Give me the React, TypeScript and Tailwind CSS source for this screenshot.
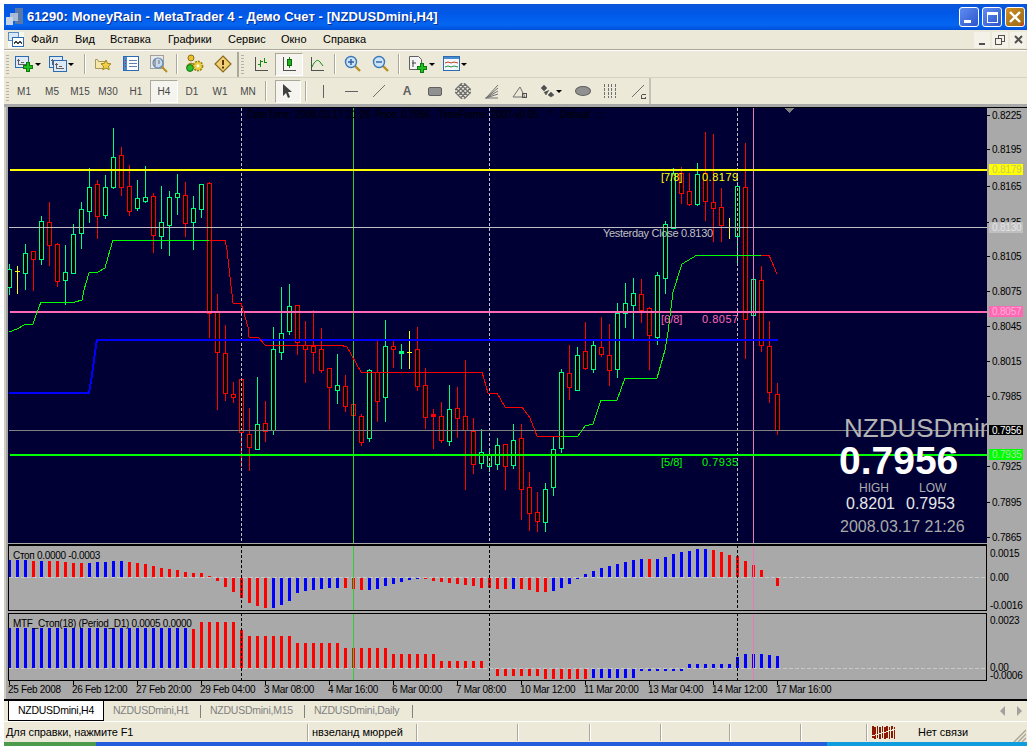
import type { ReactNode } from "react";

type Candle = [number, number, number, number, "g" | "r" | "y"];

// hi, body top, body bottom, lo. x comes from the index: 9 + 8k
const CANDLES: Candle[] = [
  [264, 269, 287, 295, "g"], [266, 271, 271, 294, "y"], [244, 253, 273, 290, "g"], [251, 251, 259, 291, "r"],
  [216, 221, 259, 265, "g"], [202, 222, 245, 266, "r"], [243, 244, 281, 287, "r"], [245, 272, 280, 305, "g"],
  [224, 234, 273, 273, "g"], [202, 209, 233, 249, "g"], [168, 187, 211, 223, "g"], [180, 184, 216, 239, "r"],
  [175, 187, 215, 219, "g"], [128, 157, 187, 189, "g"], [147, 155, 187, 196, "r"], [165, 186, 211, 216, "r"],
  [180, 198, 208, 211, "g"], [166, 197, 201, 203, "g"], [193, 196, 235, 253, "r"], [186, 222, 236, 249, "g"],
  [191, 197, 225, 256, "g"], [174, 193, 197, 215, "g"], [182, 195, 223, 237, "r"], [196, 208, 222, 250, "g"],
  [184, 184, 209, 218, "g"], [182, 183, 313, 338, "r"], [294, 312, 352, 410, "r"], [325, 353, 393, 401, "r"],
  [382, 394, 397, 403, "r"], [379, 379, 432, 467, "r"], [408, 434, 447, 471, "r"], [377, 424, 449, 449, "g"],
  [401, 423, 431, 442, "r"], [327, 349, 430, 435, "g"], [287, 333, 352, 360, "g"], [284, 306, 331, 335, "g"],
  [305, 305, 342, 355, "r"], [321, 345, 349, 383, "r"], [310, 346, 352, 374, "r"], [328, 349, 370, 373, "r"],
  [368, 368, 387, 431, "r"], [354, 385, 390, 404, "g"], [375, 386, 406, 412, "r"], [399, 404, 415, 430, "r"],
  [414, 416, 442, 446, "r"], [369, 370, 438, 442, "g"], [341, 372, 401, 422, "r"], [320, 346, 397, 422, "g"],
  [341, 346, 349, 368, "r"], [344, 351, 353, 369, "g"], [331, 352, 352, 369, "y"], [327, 349, 386, 391, "r"],
  [368, 385, 417, 429, "r"], [409, 414, 416, 449, "r"], [402, 416, 440, 443, "r"], [385, 409, 441, 446, "g"],
  [387, 408, 418, 438, "r"], [360, 416, 430, 490, "r"], [418, 431, 464, 474, "r"], [429, 452, 463, 469, "g"],
  [450, 454, 466, 472, "g"], [438, 445, 464, 470, "g"], [444, 444, 466, 490, "r"], [424, 440, 465, 469, "g"],
  [424, 438, 489, 520, "r"], [472, 487, 513, 531, "r"], [492, 512, 521, 532, "r"], [483, 489, 522, 532, "g"],
  [437, 449, 487, 496, "g"], [369, 372, 448, 453, "g"], [345, 373, 387, 400, "r"], [347, 355, 390, 390, "g"],
  [322, 351, 368, 370, "r"], [341, 345, 369, 373, "g"], [317, 347, 354, 357, "r"], [324, 355, 370, 386, "r"],
  [303, 313, 369, 378, "g"], [283, 303, 313, 328, "g"], [278, 293, 305, 339, "g"], [279, 294, 310, 323, "r"],
  [307, 308, 335, 370, "r"], [272, 275, 337, 345, "g"], [221, 224, 278, 294, "g"], [168, 173, 228, 229, "g"],
  [167, 173, 193, 204, "r"], [173, 191, 204, 206, "r"], [163, 174, 204, 206, "g"], [132, 173, 201, 221, "r"],
  [134, 202, 208, 242, "r"], [188, 207, 225, 242, "r"], [218, 227, 227, 239, "y"], [182, 186, 236, 263, "g"],
  [143, 187, 319, 359, "r"], [237, 279, 315, 347, "g"], [266, 280, 345, 352, "r"], [321, 346, 392, 403, "r"],
  [383, 394, 430, 435, "r"],
];

const CANDLE_COLORS = { g: "#00ff7f", r: "#ff0000", y: "#ffff00" };

const SUB1: [number, "b" | "r"][] = [
  [17, "b"], [17, "b"], [17, "b"], [16, "r"], [16, "b"], [16, "r"], [16, "r"], [15, "r"], [14, "r"], [14, "r"],
  [14, "b"], [15, "b"], [15, "b"], [16, "b"], [16, "b"], [15, "r"], [14, "r"], [13, "r"], [11, "r"], [9, "r"],
  [8, "r"], [7, "r"], [5, "r"], [4, "r"], [4, "r"], [1, "r"], [-3, "r"], [-9, "r"], [-14, "r"], [-20, "r"],
  [-25, "r"], [-28, "r"], [-30, "r"], [-30, "b"], [-27, "b"], [-23, "b"], [-15, "b"], [-13, "b"], [-12, "b"],
  [-11, "b"], [-10, "b"], [-10, "b"], [-10, "r"], [-11, "r"], [-12, "r"], [-12, "b"], [-11, "b"], [-8, "b"],
  [-6, "b"], [-4, "b"], [-2, "b"], [-1, "b"], [-1, "r"], [-3, "r"], [-4, "r"], [-5, "r"], [-6, "r"], [-7, "r"],
  [-8, "r"], [-10, "r"], [-10, "r"], [-11, "r"], [-11, "r"], [-11, "b"], [-11, "r"], [-12, "r"], [-14, "r"],
  [-14, "r"], [-13, "b"], [-10, "b"], [-6, "b"], [-1, "b"], [3, "b"], [6, "b"], [9, "b"], [11, "b"], [13, "b"],
  [15, "b"], [17, "b"], [18, "b"], [18, "r"], [18, "b"], [20, "b"], [23, "b"], [25, "b"], [26, "b"], [28, "b"],
  [28, "b"], [27, "r"], [25, "r"], [22, "r"], [21, "r"], [16, "r"], [12, "r"], [7, "r"], [0, "r"], [-8, "r"],
];

// runs of [count, height, colour] for the MTF window
const SUB2_RUNS: [number, number, "b" | "r"][] = [
  [23, 40, "b"], [1, 39, "r"], [5, 46, "r"], [1, 38, "r"], [6, 32, "r"], [6, 25, "r"], [6, 20, "r"], [6, 14, "r"],
  [6, 7, "r"], [1, 0, "r"], [6, -7, "r"], [6, -10, "r"], [6, -9, "b"], [6, -2, "b"], [6, 4, "b"], [1, 11, "b"],
  [3, 14, "b"], [1, 13, "b"], [1, 12, "b"],
];
const SUB2 = SUB2_RUNS.flatMap(([n, h, c]) => Array.from({ length: n }, () => [h, c] as const));

const BAR_COLORS = { b: "#0000ff", r: "#ff0000" };

const TREND: { color: string; pts: [number, number][] }[] = [
  {
    color: "#00ff00",
    pts: [[9, 332], [17, 329], [24, 325], [33, 324], [36, 315], [41, 302], [75, 302], [82, 300], [84, 290], [89, 273], [98, 272], [105, 268], [108, 257], [113, 240], [209, 240]],
  },
  {
    color: "#ff0000",
    pts: [[209, 240], [225, 240], [227, 250], [230, 277], [233, 303], [241, 303], [248, 327], [249, 337], [258, 337], [265, 345], [340, 345], [347, 347], [361, 372], [482, 372], [488, 393], [497, 393], [505, 407], [522, 407], [530, 418], [537, 436], [561, 436]],
  },
  {
    color: "#00ff00",
    pts: [[561, 436], [578, 436], [585, 426], [593, 424], [601, 400], [617, 400], [625, 378], [657, 378], [665, 350], [668, 332], [673, 292], [682, 264], [697, 255], [761, 255]],
  },
  { color: "#ff0000", pts: [[761, 255], [769, 255], [777, 274]] },
];

const PRICE_TICKS: [string, number][] = [
  ["0.8225", 115], ["0.8195", 149], ["0.8165", 186], ["0.8135", 222], ["0.8105", 256], ["0.8075", 291],
  ["0.8045", 326], ["0.8015", 361], ["0.7985", 396], ["0.7925", 466], ["0.7895", 502], ["0.7865", 537],
];

const PRICE_TAGS: [string, number, string, string][] = [
  ["0.8179", 164, "#ffff00", "#c8c860"],
  ["0.8130", 222, "#c0c0c0", "#e4e4e4"],
  ["0.8057", 306, "#ff69b4", "#ffb0d8"],
  ["0.7956", 425, "#000000", "#ffffff"],
  ["0.7935", 449, "#00ff00", "#a0e8a0"],
];

const TIME_LABELS = [
  "25 Feb 2008", "26 Feb 12:00", "27 Feb 20:00", "29 Feb 04:00", "3 Mar 08:00", "4 Mar 16:00", "6 Mar 00:00",
  "7 Mar 08:00", "10 Mar 12:00", "11 Mar 20:00", "13 Mar 04:00", "14 Mar 12:00", "17 Mar 16:00",
];

const MENU = [
  ["Файл", "w-[44px]"],
  ["Вид", "w-[35px]"],
  ["Вставка", "w-[58px]"],
  ["Графики", "w-[60px]"],
  ["Сервис", "w-[53px]"],
  ["Окно", "w-[42px]"],
  ["Справка", "w-[60px]"],
];

const PERIODS = ["M1", "M5", "M15", "M30", "H1", "H4", "D1", "W1", "MN"];

const STATUS_SEPS = ["w-[72px]", "w-[71px]", "w-[69px]", "w-[71px]", "w-[66px]"];

function xOf(k: number) {
  return 9 + 8 * k;
}

function VerticalLines({ y1, y2, dash, green, pink }: { y1: number; y2: number; dash: string; green: string; pink: string }) {
  return (
    <g shapeRendering="crispEdges">
      {[241, 489, 737].map((x) => (
        <line key={x} x1={x + 0.5} x2={x + 0.5} y1={y1} y2={y2} stroke={dash} strokeDasharray="3 2" />
      ))}
      <line x1={353.5} x2={353.5} y1={y1} y2={y2} stroke={green} />
      <line x1={753.5} x2={753.5} y1={y1} y2={y2} stroke={pink} />
    </g>
  );
}

function MainChart() {
  return (
    <svg width={1019} height={435} viewBox="8 108 1019 435" className="block shrink-0">
      <defs>
        <clipPath id="canvas">
          <rect x={8} y={108} width={979} height={435} />
        </clipPath>
      </defs>
      <rect x={8} y={108} width={979} height={435} fill="#000035" />
      <g clipPath="url(#canvas)">
        <g shapeRendering="crispEdges">
          {CANDLES.map(([hi, top, bot, lo, c], k) => {
            const x = xOf(k);
            const color = CANDLE_COLORS[c];
            return (
              <g key={k}>
                <line x1={x + 0.5} x2={x + 0.5} y1={hi} y2={lo} stroke={color} />
                {top === bot ? (
                  <line x1={x - 2} x2={x + 3} y1={top + 0.5} y2={top + 0.5} stroke={color} />
                ) : (
                  <rect x={x - 1.5} y={top + 0.5} width={4} height={bot - top} fill={bot - top <= 2 ? color : "#000000"} stroke={color} />
                )}
              </g>
            );
          })}
        </g>
        <VerticalLines y1={108} y2={543} dash="#c0c0c0" green="#32cd32" pink="#e878b8" />
        <g shapeRendering="crispEdges">
          <line x1={10} x2={987} y1={170} y2={170} stroke="#ffff00" strokeWidth={2} />
          <line x1={9} x2={987} y1={227.5} y2={227.5} stroke="#c0c0c0" />
          <line x1={10} x2={987} y1={312} y2={312} stroke="#ff69b4" strokeWidth={2} />
          <line x1={9} x2={987} y1={430.5} y2={430.5} stroke="#808080" />
          <line x1={10} x2={987} y1={455} y2={455} stroke="#00ff00" strokeWidth={2} />
          <polyline points="9,393 89,393 90,387 92,375 94,360 96,345 97,340 778,340" fill="none" stroke="#0000ff" strokeWidth={2} />
          {TREND.map((t, i) => (
            <polyline key={i} points={t.pts.map((p) => p.join(",")).join(" ")} fill="none" stroke={t.color} />
          ))}
          <polygon points="785,108 794,108 789.5,113" fill="#808080" />
        </g>
        <g fontSize={10} letterSpacing={-0.3} fill="#000000">
          <text x={230} y={118}>:::</text>
          <text x={247} y={118} letterSpacing={-0.1}>DateTime: 2008.03.17 21:26</text>
          <text x={375} y={118}>Price: 0.7956</text>
          <text x={438} y={118}>TimeFrame: 2007-v0.05</text>
          <text x={548} y={118}>*</text>
          <text x={560} y={118}>Default</text>
          <text x={596} y={118}>:::</text>
        </g>
        <g fontSize={11}>
          <g fill="#ffff00">
            <text x={661} y={181}>[7/8]</text>
            <text x={702} y={181} letterSpacing={0.5}>0.8179</text>
          </g>
          <text x={603} y={237} fill="#c0c0c0" letterSpacing={-0.3}>Yesterday Close 0.8130</text>
          <g fill="#ff69b4">
            <text x={661} y={323}>[6/8]</text>
            <text x={702} y={323} letterSpacing={0.5}>0.8057</text>
          </g>
          <g fill="#00ff00">
            <text x={661} y={466}>[5/8]</text>
            <text x={702} y={466} letterSpacing={0.5}>0.7935</text>
          </g>
        </g>
        <text x={844} y={437} fontSize={26} fill="#b4b4b4">NZDUSDmini</text>
        <text x={839} y={474} fontSize={39} fontWeight={700} fill="#ffffff">0.7956</text>
        <text x={859} y={492} fontSize={12} fill="#b0b0b0">HIGH</text>
        <text x={919} y={492} fontSize={12} fill="#b0b0b0">LOW</text>
        <text x={846} y={509} fontSize={16} fill="#e8e8e8">0.8201</text>
        <text x={906} y={509} fontSize={16} fill="#e8e8e8">0.7953</text>
        <text x={840} y={532} fontSize={16} fill="#a9a9a9">2008.03.17 21:26</text>
      </g>
      <g shapeRendering="crispEdges" fill="#000000">
        {PRICE_TICKS.map(([, y]) => (
          <rect key={y} x={987} y={y} width={3} height={1} />
        ))}
      </g>
      <g fontSize={10} letterSpacing={-0.2} fill="#000000">
        {PRICE_TICKS.map(([label, y]) => (
          <text key={label} x={992} y={y + 4}>{label}</text>
        ))}
      </g>
      {PRICE_TAGS.map(([label, y, bg, fg]) => (
        <g key={label}>
          <rect x={989} y={y} width={34} height={label === "0.7956" ? 10 : 11} fill={bg} shapeRendering="crispEdges" />
          <text x={992} y={y + 9} fontSize={10} letterSpacing={-0.2} fill={fg}>{label}</text>
        </g>
      ))}
    </svg>
  );
}

function SubWindow({ top, height, base, bars, label, ticks }: {
  top: number;
  height: number;
  base: number;
  bars: readonly (readonly [number, "b" | "r"])[];
  label: string;
  ticks: [string, number][];
}) {
  return (
    <svg width={1019} height={height} viewBox={`8 ${top} 1019 ${height}`} className="block shrink-0">
      <g shapeRendering="crispEdges">
        <line x1={9} x2={986} y1={base + 0.5} y2={base + 0.5} stroke="#c8c8c8" strokeDasharray="4 2" />
        {bars.map(([h, c], k) =>
          h === 0 ? null : (
            <rect key={k} x={xOf(k) - 1} y={h > 0 ? base - h : base + 1} width={3} height={Math.abs(h)} fill={BAR_COLORS[c]} />
          ),
        )}
      </g>
      <VerticalLines y1={top} y2={top + height} dash="#000000" green="#32cd32" pink="#e878b8" />
      <rect x={8.5} y={top + 0.5} width={978} height={height - 1} fill="none" stroke="#000000" shapeRendering="crispEdges" />
      <text x={13} y={top + 14} fontSize={10} letterSpacing={-0.3} fill="#000000">{label}</text>
      <g fontSize={10} letterSpacing={-0.2} fill="#000000">
        {ticks.map(([t, y]) => (
          <g key={t}>
            <rect x={988} y={y - 3} width={34} height={9} fill="#a9a9a9" shapeRendering="crispEdges" />
            <text x={990} y={y + 4}>{t}</text>
          </g>
        ))}
      </g>
    </svg>
  );
}

function TimeAxis() {
  return (
    <div className="flex h-[17px] shrink-0 pl-px">
      {TIME_LABELS.map((t) => (
        <div key={t} className="flex w-[64px] shrink-0 flex-col">
          <div className="h-[4px] w-px bg-black" />
          <span className="-ml-px -mt-px whitespace-nowrap text-[10px] leading-[12px] tracking-[-0.3px] text-black">{t}</span>
        </div>
      ))}
    </div>
  );
}

function Button({ w = "w-[28px]", active, children }: { w?: string; active?: boolean; children: ReactNode }) {
  return (
    <div
      className={
        "flex h-[23px] shrink-0 items-center justify-center " +
        w +
        (active ? " border border-t-[#aca899] border-r-white border-b-white border-l-[#aca899] bg-[#f5f4ee]" : "")
      }
    >
      {children}
    </div>
  );
}

function Sep() {
  return <div className="mx-[3px] h-[20px] w-[2px] shrink-0 border-r border-r-white bg-[#aca899]" />;
}

function Grip({ mr }: { mr: string }) {
  return (
    <div className={"ml-[2px] flex h-[19px] w-[3px] shrink-0 flex-col justify-between " + mr}>
      {Array.from({ length: 7 }).map((_, i) => (
        <div key={i} className="h-px w-[3px] bg-[#b5b2a5]" />
      ))}
    </div>
  );
}

function Caret() {
  return <div className="ml-px h-0 w-0 border-x-[3px] border-t-[3px] border-x-transparent border-t-black" />;
}

function Ico({ children, w = 18, h = 18 }: { children: ReactNode; w?: number; h?: number }) {
  return (
    <svg width={w} height={h} viewBox={`0 0 ${w} ${h}`} className="shrink-0">
      {children}
    </svg>
  );
}

function MiniWindow({ x = 0, y = 0 }: { x?: number; y?: number }) {
  return (
    <g transform={`translate(${x} ${y})`} shapeRendering="crispEdges">
      <rect x={0.5} y={0.5} width={13} height={11} fill="#dfe8f5" stroke="#2b6cb0" />
      <path d="M3 2.5v6h8M1.5 4.5h3M6 6.5h3" fill="none" stroke="#606060" />
    </g>
  );
}

function Plus({ x, y }: { x: number; y: number }) {
  return (
    <path
      transform={`translate(${x} ${y})`}
      d="M3.5 .5h3v3h3v3h-3v3h-3v-3h-3v-3h3z"
      fill="#22c022"
      stroke="#0c7a0c"
      shapeRendering="crispEdges"
    />
  );
}

function Magnifier({ sign }: { sign?: "+" | "-" }) {
  return (
    <Ico>
      <path d="M11 11l5 5" stroke="#b8901c" strokeWidth={2.4} />
      <circle cx={7} cy={7} r={5.5} fill="#cfe3f8" stroke="#3a78b8" strokeWidth={1.4} />
      {sign && <path d={sign === "+" ? "M4 7h6M7 4v6" : "M4 7h6"} stroke="#2a60a0" strokeWidth={1.4} />}
    </Ico>
  );
}

function Toolbar1() {
  return (
    <div className="flex h-[26px] shrink-0 items-center">
      <Grip mr="mr-[5px]" />
      <div className="flex w-[34px] shrink-0 items-center pl-px">
        <Ico w={19}><MiniWindow x={0} y={1} /><Plus x={8} y={7} /></Ico>
        <Caret />
      </div>
      <div className="flex w-[33px] shrink-0 items-center pl-[1px]">
        <Ico w={18}><MiniWindow x={0} y={1} /><MiniWindow x={4} y={5} /></Ico>
        <Caret />
      </div>
      <Sep />
      <Button>
        <Ico>
          <path d="M1.5 4.5v9h9l2-7h-8l-1-2z" fill="#f6e6a8" stroke="#a89858" />
          <path d="M12 5l1.6 3.4 3.4.4-2.5 2.4.7 3.6-3.2-1.8-3.2 1.8.7-3.6L7 8.8l3.4-.4z" fill="#f0d040" stroke="#a08820" />
        </Ico>
      </Button>
      <Button>
        <Ico w={16}>
          <g shapeRendering="crispEdges">
            <rect x={0.5} y={1.5} width={15} height={14} fill="#ffffff" stroke="#2b6cb0" />
            <rect x={1} y={2} width={3} height={13} fill="#4a8ad0" />
            <path d="M6 5h8M6 8h8M6 11h8" stroke="#6080b0" />
            <path d="M2 5h1M2 8h1M2 11h1" stroke="#c02020" />
          </g>
        </Ico>
      </Button>
      <Button>
        <Ico>
          <rect x={0.5} y={0.5} width={13} height={13} fill="#e8e8e8" stroke="#a0a0a0" shapeRendering="crispEdges" />
          <path d="M11 11l6 6" stroke="#b8901c" strokeWidth={2} />
          <circle cx={8} cy={8} r={5} fill="#c8d8ec" stroke="#6088b0" strokeWidth={1.2} />
          <path d="M5 4v7M9 5v4" stroke="#707070" />
        </Ico>
      </Button>
      <Sep />
      <Button>
        <Ico w={20} h={20}>
          <circle cx={6} cy={4} r={3} fill="#e8c030" stroke="#907010" />
          <path d="M2 13c0-5 8-5 8 0z" fill="#e0b828" stroke="#907010" />
          <circle cx={5} cy={14} r={3.4} fill="#30c030" stroke="#107010" />
          <circle cx={13} cy={12} r={4.6} fill="#e8d040" stroke="#a08010" strokeDasharray="2 1" strokeWidth={1.6} />
          <circle cx={13} cy={12} r={1.4} fill="#ffffff" />
        </Ico>
      </Button>
      <Button>
        <Ico>
          <path d="M9 1l8 8-8 8-8-8z" fill="#f0d070" stroke="#8a6a20" strokeWidth={1.2} />
          <path d="M9 5v5" stroke="#603010" strokeWidth={2} />
          <rect x={8} y={11.5} width={2} height={2} fill="#603010" />
        </Ico>
      </Button>
      <div className="h-[25px] w-[2px] shrink-0 bg-[#aca899]" />
      <Grip mr="mr-[3px]" />
      <Button>
        <Ico>
          <path d="M3.5 2v13.5H16" fill="none" stroke="#505050" shapeRendering="crispEdges" />
          <path d="M8.5 12V5M8.5 9H6M8.5 6H11M12.5 8V3M12.5 7H15" fill="none" stroke="#108a10" shapeRendering="crispEdges" />
        </Ico>
      </Button>
      <Button active>
        <Ico>
          <path d="M3.5 2v13.5H16" fill="none" stroke="#505050" shapeRendering="crispEdges" />
          <path d="M9.5 2v11" stroke="#108a10" shapeRendering="crispEdges" />
          <rect x={7.5} y={4.5} width={4} height={6} fill="#20b020" stroke="#0a6a0a" shapeRendering="crispEdges" />
        </Ico>
      </Button>
      <Button>
        <Ico>
          <path d="M3.5 2v13.5H16" fill="none" stroke="#505050" shapeRendering="crispEdges" />
          <path d="M4 12c3-7 6-8 8-5l3 4" fill="none" stroke="#108a10" />
        </Ico>
      </Button>
      <Sep />
      <Button><Magnifier sign="+" /></Button>
      <Button><Magnifier sign="-" /></Button>
      <Sep />
      <div className="flex w-[33px] shrink-0 items-center pl-[5px]">
        <Ico w={20}>
          <path d="M1.5 1.5h9l3 3v10h-12z" fill="#f4f4f4" stroke="#606060" />
          <path d="M5 5v7M4 8h4" stroke="#404040" />
          <Plus x={9} y={8} />
        </Ico>
        <Caret />
      </div>
      <div className="flex w-[33px] shrink-0 items-center pl-[7px]">
        <Ico w={17}>
          <g shapeRendering="crispEdges">
            <rect x={0.5} y={1.5} width={16} height={14} fill="#f4f8fc" stroke="#2b6cb0" />
            <rect x={1} y={2} width={15} height={2} fill="#4a8ad0" />
          </g>
          <path d="M2 8l3-1 3 1 3-1 4 1" fill="none" stroke="#c04020" />
          <path d="M2 12l3-1 3 1 3-1 4 1" fill="none" stroke="#209040" />
        </Ico>
        <Caret />
      </div>
    </div>
  );
}

function Toolbar2() {
  return (
    <div className="flex h-[26px] w-[647px] shrink-0 items-center border-r-2 border-r-[#c5c2b8]">
      <Grip mr="mr-px" />
      {PERIODS.map((p) => (
        <Button key={p} active={p === "H4"}>
          <span className="text-[10px] text-[#484848]">{p}</span>
        </Button>
      ))}
      <Sep />
      <div className="w-[5px] shrink-0" />
      <Button active w="w-[26px]">
        <Ico w={12} h={16}>
          <path d="M1 1v12l3-3 2 5 2-1-2-5h4z" fill="#404040" />
        </Ico>
      </Button>
      <div className="ml-[4px] mr-[2px] h-[20px] w-[2px] shrink-0 border-r border-r-white bg-[#aca899]" />
      <Button><div className="h-[13px] w-px bg-[#606060]" /></Button>
      <Button><div className="h-px w-[13px] bg-[#606060]" /></Button>
      <Button>
        <Ico w={14} h={14}><path d="M1 13L13 1" stroke="#707070" /></Ico>
      </Button>
      <Button><span className="text-[12px] font-bold text-[#606060]">A</span></Button>
      <Button><div className="h-[9px] w-[14px] rounded-[2px] border border-[#606060] bg-[#909090]" /></Button>
      <Button>
        <Ico w={16} h={16}>
          <path d="M0 0h16M0 4h16M0 8h16M0 12h16M0 16h16M0 0v16M4 0v16M8 0v16M12 0v16M16 0v16" transform="rotate(45 8 8) scale(.8) translate(2 2)" stroke="#707070" strokeWidth={1.6} fill="none" />
        </Ico>
      </Button>
      <Button>
        <Ico w={15} h={15}>
          <path d="M2 14L14 1M2 14L14 4M2 14L14 7M2 14L14 10M1 14h13" stroke="#707070" fill="none" />
        </Ico>
      </Button>
      <Button>
        <Ico w={15} h={15}>
          <path d="M1 13L8 3l5 10z" fill="none" stroke="#707070" />
          <rect x={10} y={9} width={4} height={4} fill="none" stroke="#505050" shapeRendering="crispEdges" />
        </Ico>
      </Button>
      <div className="flex w-[37px] shrink-0 items-center justify-center">
        <Ico w={14} h={14}>
          <path d="M3 1l3 3-3 3-3-3zM3 8l2 3 3-5M10 8l3 3-3 2-3-2z" fill="#505050" stroke="#505050" strokeWidth={0.5} />
        </Ico>
        <Caret />
      </div>
      <Button w="w-[26px]"><div className="h-[10px] w-[16px] rounded-[50%] border border-[#606060] bg-[#909090]" /></Button>
      <Button>
        <Ico w={14} h={16}>
          <path d="M1.5 1v14M5.5 1v14M8.5 1v14M12.5 1v14" stroke="#707070" shapeRendering="crispEdges" strokeDasharray="3 1" />
        </Ico>
      </Button>
      <Button w="w-[29px]">
        <Ico w={15} h={15}>
          <path d="M1 13L13 1" stroke="#707070" />
          <path d="M10.5 10.5h4M10.5 10.5v4h4M14.5 12.5v2h-2" fill="none" stroke="#505050" shapeRendering="crispEdges" />
        </Ico>
      </Button>
    </div>
  );
}

export default function App() {
  return (
    <div className="h-[746px] w-[1032px] overflow-hidden bg-white pl-[4px] pr-[5px] pt-[4px] font-['Liberation_Sans',Arial,sans-serif]">
      <div className="flex h-[742px] w-[1023px] flex-col bg-[#ece9d8] text-[11px] text-black">
        {/* Title bar */}
        <div className="flex h-[26px] shrink-0 items-center bg-[linear-gradient(180deg,#0a56d8_0%,#0058e8_35%,#0466f2_80%,#0050d8_100%)] pl-[2px] pr-[2px]">
          <svg width={17} height={18} viewBox="0 0 19 20" className="mr-[4px] shrink-0" shapeRendering="crispEdges">
            <rect x={10} y={0} width={9} height={18} fill="#5878a8" />
            <rect x={5} y={5} width={8} height={9} fill="#a8bcd8" />
            <rect x={0} y={10} width={8} height={9} fill="#c8d4e4" />
          </svg>
          <span className="text-[13px] font-bold tracking-[0.08px] text-white [text-shadow:1px_1px_0_#0a2a88]">
            61290: MoneyRain - MetaTrader 4 - Демо Счет - [NZDUSDmini,H4]
          </span>
          <div className="ml-auto flex gap-[3px]">
            <div className="flex h-[20px] w-[20px] items-end justify-start rounded-[3px] border border-white bg-[linear-gradient(135deg,#5f8df0,#2a55cc)] pb-[3px] pl-[4px]">
              <div className="h-[3px] w-[7px] bg-white" />
            </div>
            <div className="flex h-[20px] w-[20px] items-center justify-center rounded-[3px] border border-white bg-[linear-gradient(135deg,#5f8df0,#2a55cc)]">
              <div className="h-[11px] w-[11px] border border-t-[3px] border-white" />
            </div>
            <div className="relative flex h-[20px] w-[20px] items-center justify-center overflow-hidden rounded-[3px] border border-white bg-[linear-gradient(135deg,#d89020_0%,#b07a1c_50%,#a87018_85%,#e01010_100%)]">
              <svg width={14} height={14} viewBox="0 0 14 14">
                <path d="M2 2l10 10M12 2L2 12" stroke="#ffffff" strokeWidth={2.4} />
              </svg>
            </div>
          </div>
        </div>

        {/* Menu bar */}
        <div className="flex h-[20px] shrink-0 items-center border-b border-b-[#aca899] pl-[4px] pr-[1px]">
          <svg width={16} height={16} viewBox="0 0 16 16" className="mr-[7px] shrink-0 bg-[#f8f8f4]" shapeRendering="crispEdges">
            <rect x={0.5} y={0.5} width={10} height={8} fill="#d8e8f8" stroke="#5a8ac0" />
            <rect x={4.5} y={5.5} width={11} height={9} fill="#ffffff" stroke="#2b6cb0" />
            <path d="M6 12l2-3 2 3 2-3 2 3" fill="none" stroke="#404040" />
          </svg>
          {MENU.map(([m, w]) => (
            <span key={m} className={"shrink-0 text-[11px] " + w}>{m}</span>
          ))}
          <div className="ml-auto flex gap-[2px]">
            <div className="flex h-[16px] w-[16px] items-end justify-center bg-[#f4f2e8] pb-[3px]">
              <div className="h-[2px] w-[6px] bg-[#505050]" />
            </div>
            <div className="flex h-[16px] w-[16px] items-center justify-center bg-[#f4f2e8]">
              <svg width={10} height={10} viewBox="0 0 10 10" shapeRendering="crispEdges">
                <path d="M3 .5h6.5v6H7M3 .5v2M.5 3.5h6v6h-6zM.5 3h6" fill="none" stroke="#505050" />
              </svg>
            </div>
            <div className="flex h-[16px] w-[16px] items-center justify-center bg-[#f4f2e8]">
              <svg width={9} height={9} viewBox="0 0 9 9">
                <path d="M1 1l7 7M8 1L1 8" stroke="#505050" strokeWidth={2} />
              </svg>
            </div>
          </div>
        </div>

        {/* Toolbars */}
        <div className="flex shrink-0 flex-col border-t border-t-white">
          <Toolbar1 />
          <div className="h-px shrink-0 bg-[#d5d2c4]" />
          <Toolbar2 />
        </div>

        {/* Chart frame */}
        <div className="flex h-[595px] shrink-0 flex-col bg-[#a9a9a9]">
          <div className="h-[3px] shrink-0" />
          <div className="flex min-h-0 flex-1">
            <div className="w-[4px] shrink-0 border-l-2 border-l-[#d0ccc0]" />
            <div className="flex flex-col">
              <div className="h-px shrink-0 bg-black" />
              <MainChart />
              <div className="mt-px h-px w-[979px] shrink-0 bg-black" />
              <SubWindow
                top={545}
                height={66}
                base={577}
                bars={SUB1}
                label="Стоп 0.0000 -0.0003"
                ticks={[["0.0015", 553], ["0.00", 577], ["-0.0016", 605]]}
              />
              <div className="h-[2px] shrink-0" />
              <SubWindow
                top={613}
                height={68}
                base={668}
                bars={SUB2}
                label="MTF_Стоп(18) (Period_D1) 0.0005 0.0000"
                ticks={[["0.0023", 620], ["0.00", 667], ["-0.0006", 675]]}
              />
              <TimeAxis />
            </div>
          </div>
        </div>

        {/* Tabs */}
        <div className="flex h-[22px] shrink-0 items-start border-t-2 border-t-black pl-[4px] pr-[5px] text-[10.5px] tracking-[-0.25px]">
          <div className="flex h-[20px] w-[96px] shrink-0 items-center justify-center border-x border-b border-black bg-white">NZDUSDmini,H4</div>
          <div className="flex h-[20px] items-center text-[#808080]">
            <span className="w-[96px] pl-[9px]">NZDUSDmini,H1</span>
            <div className="h-[13px] w-px bg-[#808080]" />
            <span className="w-[103px] pl-[9px]">NZDUSDmini,M15</span>
            <div className="h-[13px] w-px bg-[#808080]" />
            <span className="w-[107px] pl-[9px]">NZDUSDmini,Daily</span>
            <div className="h-[13px] w-px bg-[#808080]" />
          </div>
          <div className="ml-auto flex h-[20px] items-center gap-[12px]">
            <div className="h-0 w-0 border-y-[5px] border-r-[5px] border-y-transparent border-r-[#a0a0a0]" />
            <div className="h-0 w-0 border-y-[5px] border-l-[5px] border-y-transparent border-l-[#a0a0a0]" />
          </div>
        </div>

        {/* Status bar */}
        <div className="flex h-[21px] shrink-0 items-center border-t border-t-white text-[11px]">
          <span className="w-[303px] shrink-0 pl-[2px] tracking-[-0.1px]">Для справки, нажмите F1</span>
          <div className="h-[17px] w-[2px] shrink-0 border-r border-r-white bg-[#aca899]" />
          <span className="w-[107px] shrink-0 pl-[3px]">нвзеланд мюррей</span>
          <div className="h-[17px] w-[2px] shrink-0 border-r border-r-white bg-[#aca899]" />
          <div className="w-[99px] shrink-0" />
          <div className="h-[17px] w-[2px] shrink-0 border-r border-r-white bg-[#aca899]" />
          {STATUS_SEPS.map((w, i) => (
            <div key={i} className={"flex shrink-0 justify-end " + w}>
              <div className="h-[17px] w-[2px] border-r border-r-white bg-[#aca899]" />
            </div>
          ))}
          <svg width={24} height={13} viewBox="0 0 24 13" className="ml-[4px] shrink-0" shapeRendering="crispEdges">
            {Array.from({ length: 10 }).map((_, i) => (
              <rect key={i} x={i * 2.4} y={i % 2 ? 1 : 0} width={1.6} height={12} fill="#8b1a00" />
            ))}
            <path d="M0 10L24 3" stroke="#ece9d8" />
          </svg>
          <span className="ml-[22px] shrink-0">Нет связи</span>
          <svg width={14} height={14} viewBox="0 0 14 14" className="ml-auto mr-px shrink-0 self-end">
            <path d="M14 2L2 14M14 6L6 14M14 10L10 14" stroke="#aca899" strokeWidth={1.5} />
          </svg>
        </div>

        {/* Bottom edge of the desktop taskbar */}
        <div className="flex h-[4px] shrink-0">
          <div className="w-[92px] bg-[#4c9a4c]" />
          <div className="w-[731px] bg-[#245edb]" />
          <div className="flex-1 bg-[#0f9de0]" />
        </div>
      </div>
    </div>
  );
}
